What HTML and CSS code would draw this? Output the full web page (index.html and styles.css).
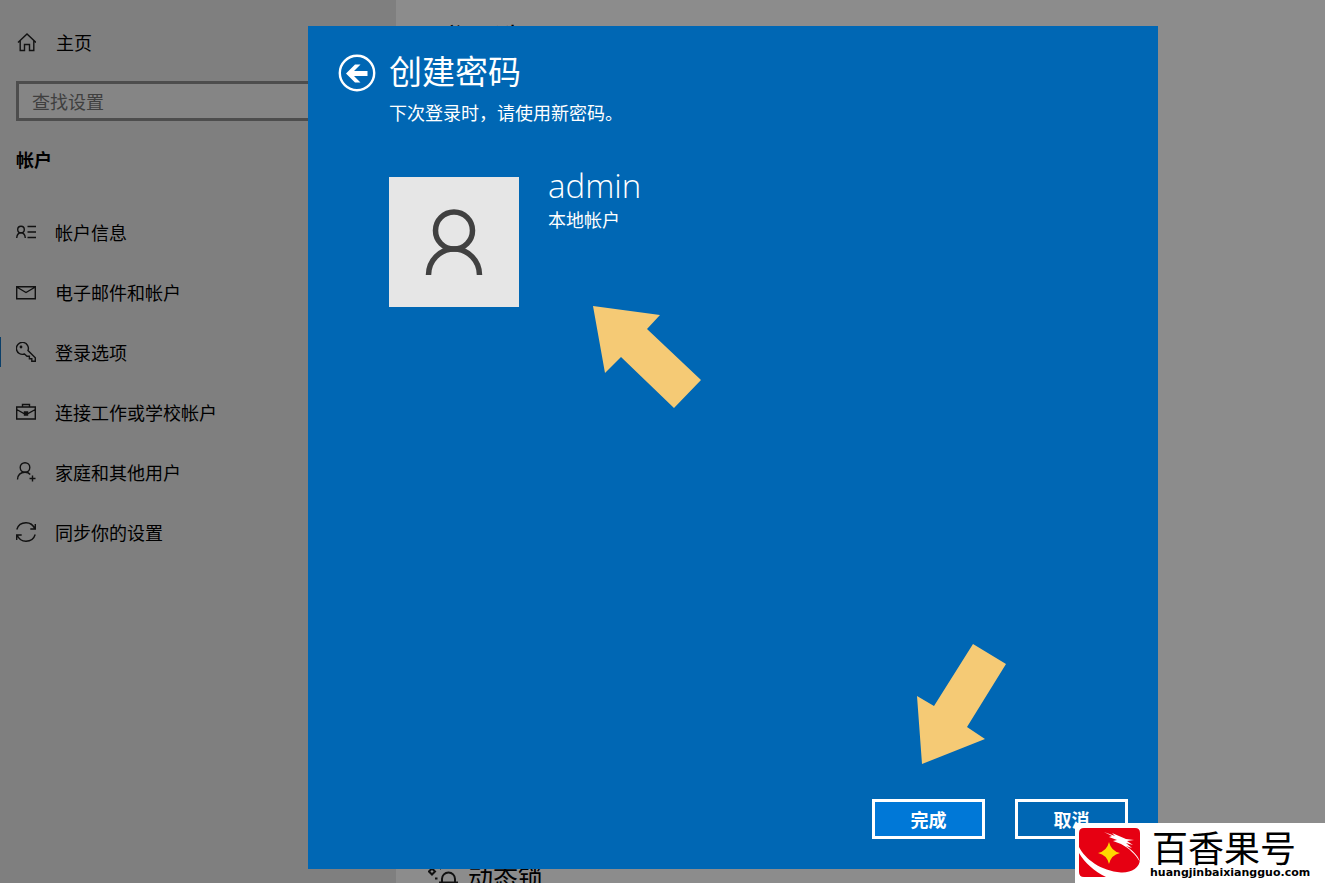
FILE: index.html
```html
<!DOCTYPE html>
<html lang="zh-CN">
<head>
<meta charset="UTF-8" />
<meta name="viewport" content="width=device-width, initial-scale=1" />
<title>设置</title>
<link rel="stylesheet" href="styles.css">
</head>
<body>
  <div class="settings">
    <nav class="sidebar">
      <a class="home" href="#home">
        <svg class="icon" viewBox="0 0 20 20"><path d="M2 10.500 11 2l9 8.500M4.200 8.500v10h4.300v-6h5v6h4.300v-10" /></svg>
        <span>主页</span>
      </a>
      <input class="search" type="text" placeholder="查找设置" aria-label="查找设置" />
      <h2 class="group">帐户</h2>
      <ul class="menu">
        <li><a href="#info">
          <svg class="icon" viewBox="0 0 20 20"><circle cx="5" cy="7.500" r="3.300" /><path d="M.700 16C1 12.500 2.500 10.700 5 10.700s4 1.800 4.300 5.300M11.500 4.500H20M11.500 10H20M11.500 15.500H20" /></svg>
          <span>帐户信息</span>
        </a></li>
        <li><a href="#email">
          <svg class="icon" viewBox="0 0 20 20"><path d="M.700 4.700h18.600v12H.700zM.700 5 10 10.500 19.300 5" /></svg>
          <span>电子邮件和帐户</span>
        </a></li>
        <li class="active"><a href="#signin">
          <svg class="icon" viewBox="0 0 20 20"><path d="M8.500 12A6 6 0 1 1 12 8.500l7.300 7.200v3.600h-3.500v-2.600h-2.400v-2.500h-2.400z" /><circle class="dot" cx="5" cy="5" r="1.400" /></svg>
          <span>登录选项</span>
        </a></li>
        <li><a href="#work">
          <svg class="icon" viewBox="0 0 20 20"><path d="M.700 5h18.600v12H.700zM6.500 5V2.500h7V5M.700 7.500 8 11.500h4l7.300-4M8.500 10h3v3h-3z" /></svg>
          <span>连接工作或学校帐户</span>
        </a></li>
        <li><a href="#family">
          <svg class="icon" viewBox="0 0 20 20"><circle cx="9" cy="5.500" r="4.800" /><path d="M1.500 17.500c.300-4.500 3-7.200 7.500-7.200 2.300 0 4 .700 5.200 2.200M16.500 13.500v6M13.500 16.500h6" /></svg>
          <span>家庭和其他用户</span>
        </a></li>
        <li><a href="#sync">
          <svg class="icon" viewBox="0 0 20 20"><path d="M.800 7.500C2 3.500 5.500.800 10 .800c4 0 7.200 2.200 8.800 6M19.300 2v5h-5M19.200 12.500c-1.200 4-4.700 6.700-9.200 6.700-4 0-7.200-2.200-8.800-6M.700 18v-5h5" /></svg>
          <span>同步你的设置</span>
        </a></li>
      </ul>
    </nav>

    <main class="content">
      <h1>登录选项</h1>
      <h2 class="lock">
        <svg class="lock-icon" viewBox="0 0 30 30"><path d="M4 7.500 7 10.500 4 13.500 1 10.500zM7 17.500h2.500M12 8h.500M14 30V18a6.500 6.500 0 0 1 13 0v12M11 21.500h19" /></svg>
        <span>动态锁</span>
      </h2>
    </main>
  </div>

  <div class="dialog" role="dialog" aria-labelledby="dialog-title">
    <header class="dialog-head">
      <button class="back" type="button" aria-label="返回">
        <svg viewBox="0 0 38 38"><circle cx="19" cy="19" r="17.200" /><path d="M8 19.500 17 10.500h5.500l-6.500 6.500h13.500v5H16l6.500 6.500H17z" /></svg>
      </button>
      <div>
        <h1 id="dialog-title">创建密码</h1>
        <p>下次登录时，请使用新密码。</p>
      </div>
    </header>
    <section class="account">
      <svg class="avatar" viewBox="0 0 130 130"><circle cx="65" cy="53.500" r="18.500" /><path d="M39.500 98a25.500 26 0 0 1 51 0" /></svg>
      <div>
        <div class="name">admin</div>
        <div>本地帐户</div>
      </div>
    </section>
    <footer class="actions">
      <button class="btn primary" type="button">完成</button>
      <button class="btn" type="button">取消</button>
    </footer>
    <svg class="arrow arrow-account" viewBox="0 0 108 102"><path d="M0 0 67 9 54 23 108 74 81 102 28 51 12 67z" /></svg>
    <svg class="arrow arrow-done" viewBox="0 0 89 120"><path d="M56 0 89 20 50 83 68 95 5 120 0 52 17 62z" /></svg>
  </div>

  <aside class="brand">
    <svg class="brand-logo" viewBox="0 0 62 50">
      <path class="red" d="M5 0h51q5 0 5 5v26c0 9-9 14-19 13.500C22 43 6 31 0 19V5q0-5 5-5zM0 25c6 10 15 18 27 24H5q-5 0-5-5z" />
      <path class="white" d="M25 4l11 4-3-3 14 6 8 1-7 1 6 4-7-2 6 5-6-2c6 4 12 9 14 16-4-7-11-14-19-18l-8-3 4-1-8-3 3-1z" />
      <path class="star" d="M30 14q2 9 11 11-9 2-11 11-2-9-11-11 9-2 11-11z" />
    </svg>
    <div>
      <div class="brand-name">百香果号</div>
      <div class="brand-url">huangjinbaixiangguo.com</div>
    </div>
  </aside>
</body>
</html>
```
FILE: styles.css
```css
* {
  box-sizing: border-box;
}

body {
  margin: 0;
  height: 100vh;
  overflow: hidden;
  font-family: "Noto Sans CJK SC", sans-serif;
  font-size: 18px;
  line-height: 24px;
  color: #000;
  background: #8c8c8c;
}

h1, h2, p, ul {
  margin: 0;
  padding: 0;
  font-weight: 400;
}

a {
  color: inherit;
  text-decoration: none;
}

.settings {
  display: flex;
  height: 100%;
}

.sidebar {
  width: 396px;
  padding: 30px 16px;
  background: #7f7f7f;
}

.icon {
  width: 20px;
  height: 20px;
  fill: none;
  stroke: #111;
  stroke-width: 1.4;
}

.icon .dot {
  fill: #111;
  stroke: none;
}

.home {
  display: flex;
  align-items: center;
  gap: 20px;
}

.search {
  display: block;
  width: 100%;
  height: 40px;
  margin-top: 27px;
  padding: 0 13px;
  border: 3px solid #4d4d4d;
  background: #858585;
  font: inherit;
}

.search::placeholder {
  color: #3f3f3f;
}

.group {
  margin: 26px 0 31px;
  font-size: 18px;
  font-weight: 700;
}

.menu {
  margin: 0 -16px;
  list-style: none;
}

.menu a {
  display: flex;
  align-items: center;
  gap: 19px;
  height: 60px;
  padding: 0 16px;
}

.menu .active {
  background: linear-gradient(#0b3f69, #0b3f69) left center / 1px 30px no-repeat;
}

.content {
  flex: 1;
  display: flex;
  flex-direction: column;
  justify-content: space-between;
  padding: 20px 32px 0;
}

.content h1 {
  padding-left: 8px;
  font-size: 29px;
  line-height: 34px;
}

.lock {
  display: flex;
  gap: 10px;
  height: 22px;
  font-size: 25px;
  line-height: 30px;
}

.lock-icon {
  width: 30px;
  height: 30px;
  fill: none;
  stroke: #111;
  stroke-width: 2;
}

.dialog {
  position: absolute;
  inset: 26px 167px 14px 308px;
  display: flex;
  flex-direction: column;
  padding: 24px 30px 30px;
  color: #fff;
  background: #0067b4;
}

.dialog-head {
  display: flex;
  gap: 13px;
}

.back {
  width: 38px;
  height: 38px;
  margin-top: 4px;
  padding: 0;
  border: 0;
  background: none;
}

.back svg {
  display: block;
  fill: #fff;
}

.back circle {
  fill: none;
  stroke: #fff;
  stroke-width: 2.4;
}

.dialog-head h1 {
  font-size: 33px;
  line-height: 40px;
}

.dialog-head p {
  margin-top: 10px;
}

.account {
  display: flex;
  gap: 29px;
  margin: 53px 51px 0;
}

.avatar {
  width: 130px;
  height: 130px;
  background: #e6e6e6;
  fill: none;
  stroke: #414141;
  stroke-width: 5.5;
}

.name {
  margin-top: -12px;
  font-family: "Open Sans", sans-serif;
  font-size: 33px;
  font-weight: 300;
  line-height: 42px;
}

.actions {
  display: flex;
  justify-content: flex-end;
  gap: 30px;
  margin-top: auto;
}

.btn {
  width: 113px;
  height: 40px;
  padding: 0;
  border: 3px solid #fff;
  color: #fff;
  background: #0067b4;
  font: inherit;
  font-weight: 700;
}

.primary {
  background: #0078d7;
}

.arrow {
  position: absolute;
  fill: #f5ca75;
}

.arrow-account {
  left: 285px;
  top: 280px;
  width: 108px;
}

.arrow-done {
  right: 152px;
  bottom: 105px;
  width: 89px;
}

.brand {
  position: absolute;
  right: 0;
  bottom: 0;
  display: flex;
  gap: 9px;
  width: 250px;
  height: 60px;
  padding: 5px 4px;
  background: #fff;
}

.brand-logo {
  width: 62px;
  height: 50px;
}

.brand .red {
  fill: #e60012;
}

.brand .white {
  fill: #fff;
}

.brand .star {
  fill: #ffd800;
}

.brand-name {
  padding-left: 2px;
  font-size: 36px;
  font-weight: 400;
  line-height: 36px;
}

.brand-url {
  font-family: "DejaVu Sans", sans-serif;
  font-size: 11px;
  font-weight: 700;
  line-height: 18px;
}
```
